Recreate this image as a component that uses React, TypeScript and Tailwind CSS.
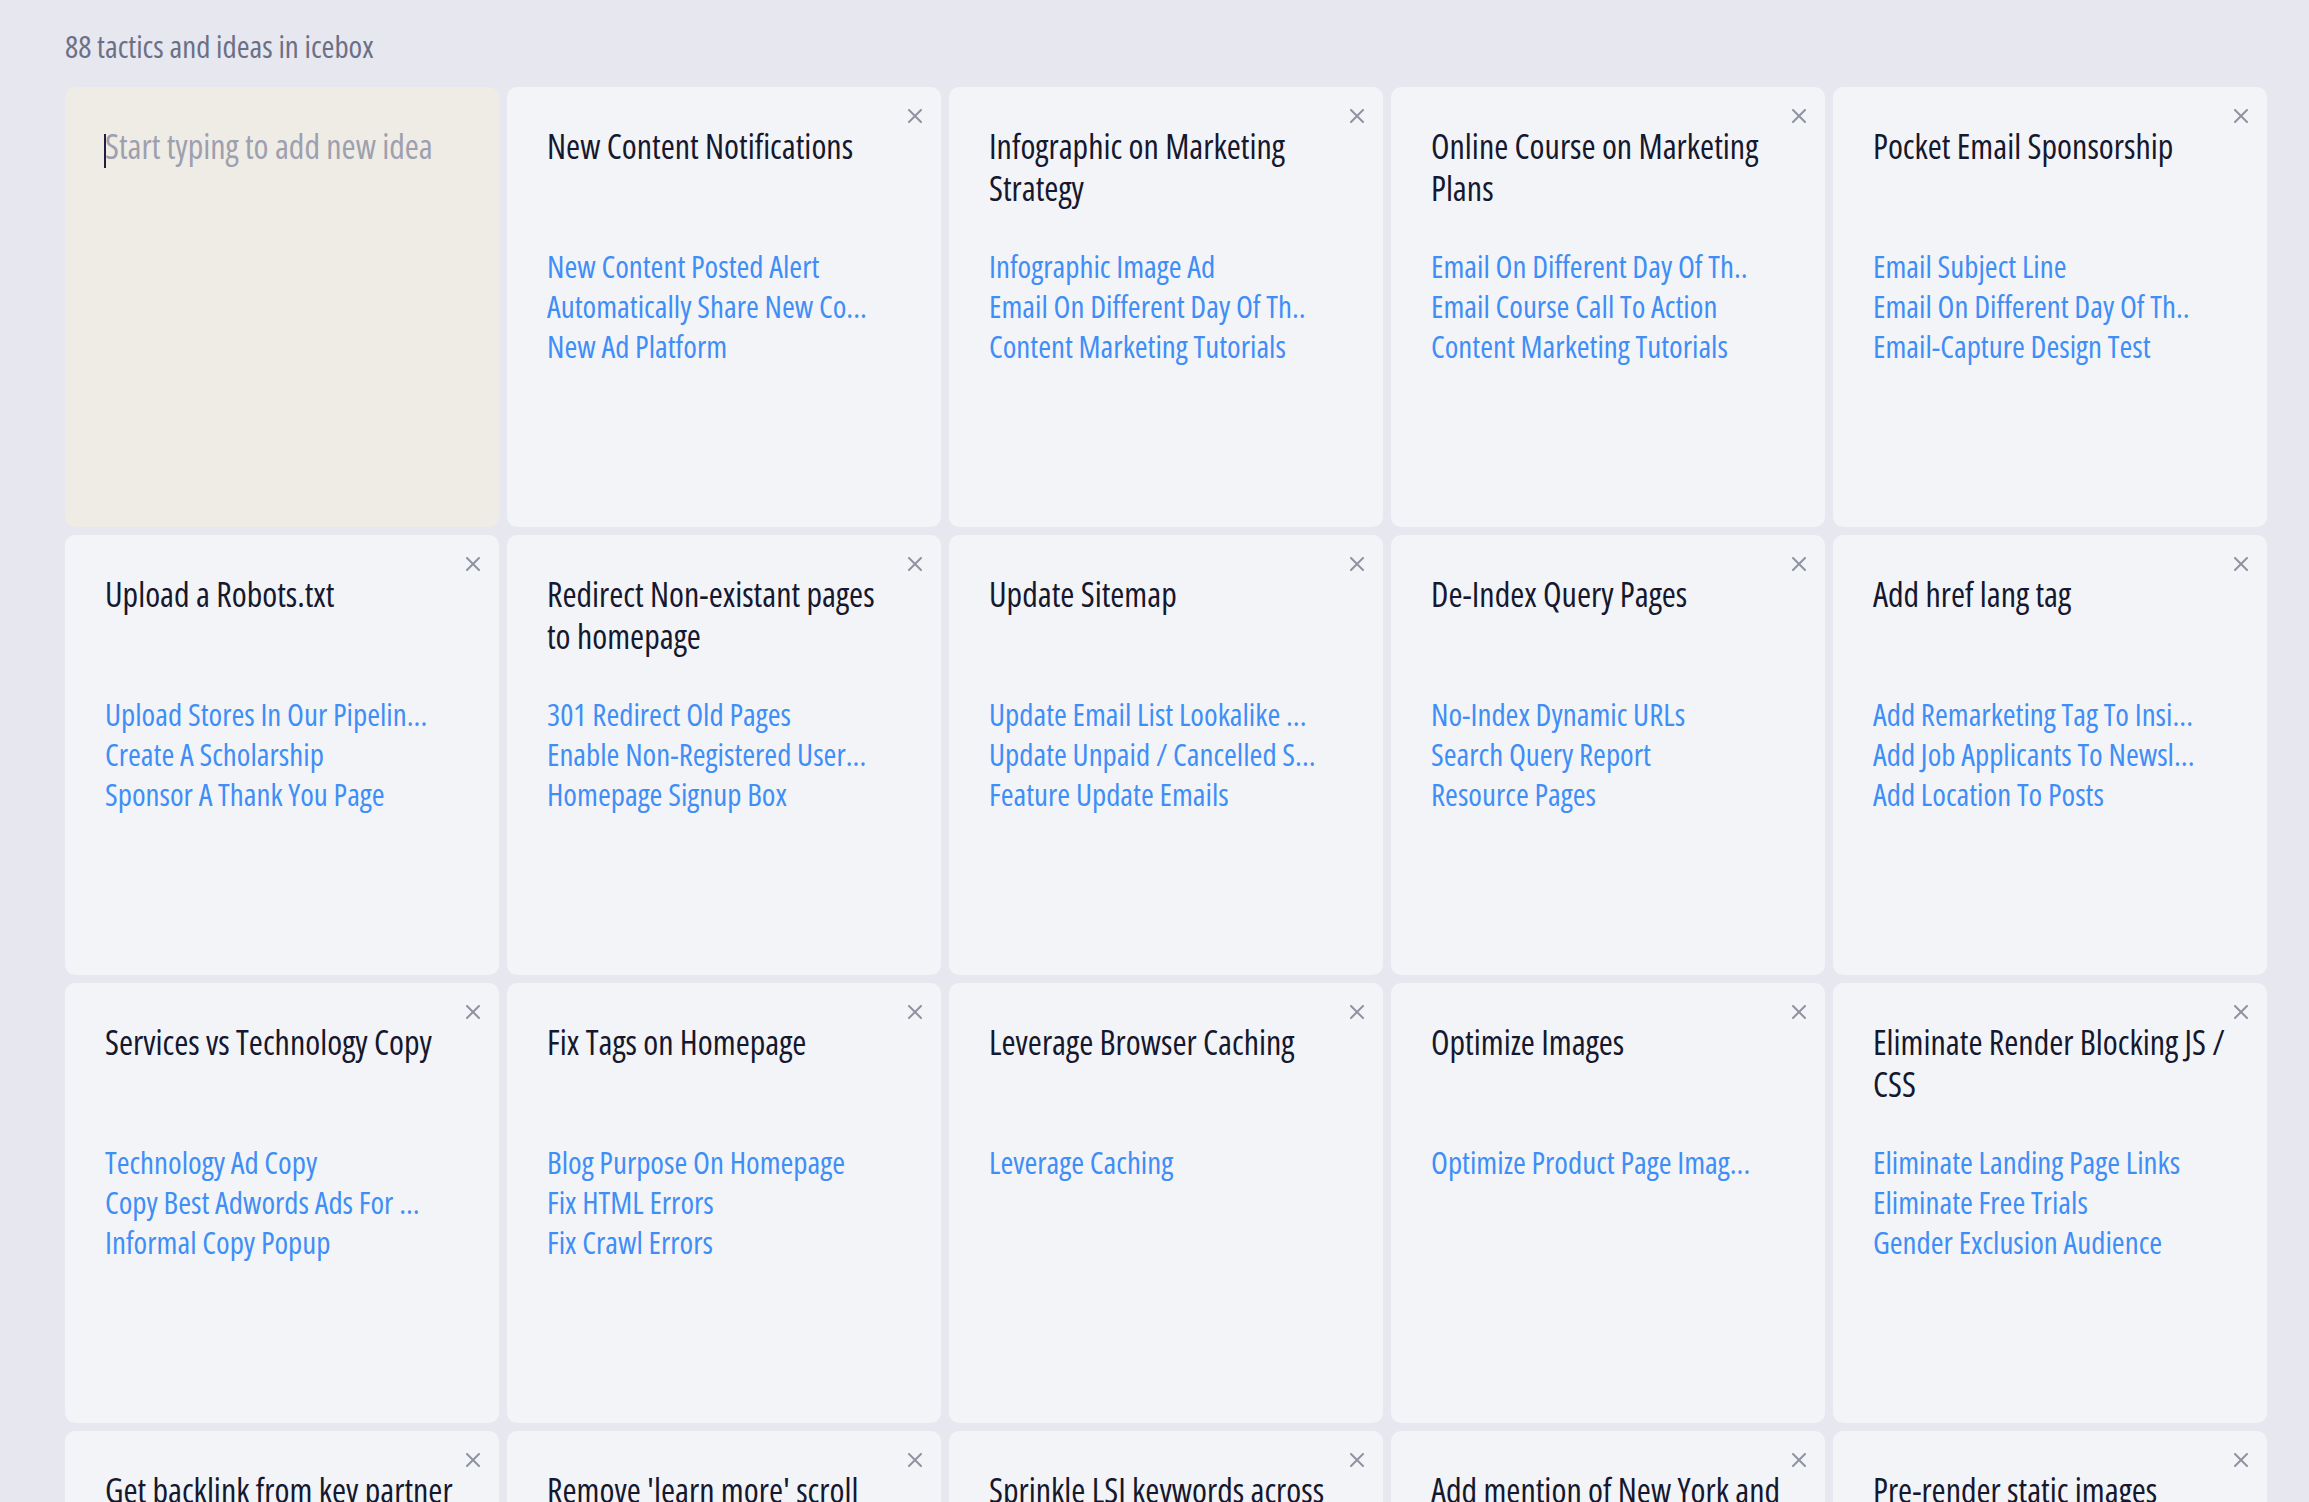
import { useState } from "react";

type Idea = {
  title: string;
  tactics: string[];
};

const ideas: Idea[] = [
  {
    title: "New Content Notifications",
    tactics: ["New Content Posted Alert", "Automatically Share New Co...", "New Ad Platform"],
  },
  {
    title: "Infographic on Marketing Strategy",
    tactics: ["Infographic Image Ad", "Email On Different Day Of Th..", "Content Marketing Tutorials"],
  },
  {
    title: "Online Course on Marketing Plans",
    tactics: ["Email On Different Day Of Th..", "Email Course Call To Action", "Content Marketing Tutorials"],
  },
  {
    title: "Pocket Email Sponsorship",
    tactics: ["Email Subject Line", "Email On Different Day Of Th..", "Email-Capture Design Test"],
  },
  {
    title: "Upload a Robots.txt",
    tactics: ["Upload Stores In Our Pipelin...", "Create A Scholarship", "Sponsor A Thank You Page"],
  },
  {
    title: "Redirect Non-existant pages to homepage",
    tactics: ["301 Redirect Old Pages", "Enable Non-Registered User...", "Homepage Signup Box"],
  },
  {
    title: "Update Sitemap",
    tactics: ["Update Email List Lookalike ...", "Update Unpaid / Cancelled S...", "Feature Update Emails"],
  },
  {
    title: "De-Index Query Pages",
    tactics: ["No-Index Dynamic URLs", "Search Query Report", "Resource Pages"],
  },
  {
    title: "Add href lang tag",
    tactics: ["Add Remarketing Tag To Insi...", "Add Job Applicants To Newsl...", "Add Location To Posts"],
  },
  {
    title: "Services vs Technology Copy",
    tactics: ["Technology Ad Copy", "Copy Best Adwords Ads For ...", "Informal Copy Popup"],
  },
  {
    title: "Fix Tags on Homepage",
    tactics: ["Blog Purpose On Homepage", "Fix HTML Errors", "Fix Crawl Errors"],
  },
  {
    title: "Leverage Browser Caching",
    tactics: ["Leverage Caching"],
  },
  {
    title: "Optimize Images",
    tactics: ["Optimize Product Page Imag..."],
  },
  {
    title: "Eliminate Render Blocking JS / CSS",
    tactics: ["Eliminate Landing Page Links", "Eliminate Free Trials", "Gender Exclusion Audience"],
  },
  {
    title: "Get backlink from key partner sites",
    tactics: ["Partner Link Exchange"],
  },
  {
    title: "Remove 'learn more' scroll arrow",
    tactics: ["Homepage Signup Box"],
  },
  {
    title: "Sprinkle LSI keywords across pages",
    tactics: ["Keyword Research"],
  },
  {
    title: "Add mention of New York and NYC",
    tactics: ["Local Landing Pages"],
  },
  {
    title: "Pre-render static images",
    tactics: ["Optimize Product Page Imag..."],
  },
];

function CloseIcon() {
  return (
    <svg width="14" height="14" viewBox="0 0 14 14" className="block">
      <path d="M1 1L13 13M13 1L1 13" stroke="#8f929f" strokeWidth="2" strokeLinecap="round" />
    </svg>
  );
}

function IdeaCard({ idea }: { idea: Idea }) {
  return (
    <div className="relative h-[440px] rounded-[10px] bg-[#f3f4f8] pl-10 pr-10 pt-[38px]">
      <button type="button" className="absolute right-[19px] top-[22px]">
        <CloseIcon />
      </button>
      <h2 className="min-h-[84px] text-[34px] leading-[42px] text-[#15182e]">{idea.title}</h2>
      <ul className="mt-[37px]">
        {idea.tactics.map((t, i) => (
          <li key={i} className="whitespace-nowrap text-[31px] leading-[40px] text-[#3f8ef6]">
            {t}
          </li>
        ))}
      </ul>
    </div>
  );
}

export default function App() {
  const [draft, setDraft] = useState("");

  return (
    <main className="min-h-screen bg-[#e6e7ef] pb-10 pl-[65px] pr-[42px] pt-[25px] font-['Open_Sans',sans-serif] font-stretch-condensed">
      <p className="text-[31px] leading-[42px] text-[#6c7086]">88 tactics and ideas in icebox</p>

      <div className="mt-[20px] grid grid-cols-5 gap-2">
        <div className="relative h-[440px] rounded-[10px] bg-[#efece5] px-10 pt-[38px]">
          {draft === "" && (
            <span className="pointer-events-none absolute left-[39px] top-[47px] h-[34px] w-[1.5px] bg-[#1d2040]" />
          )}
          <textarea
            value={draft}
            onChange={(e) => setDraft(e.target.value)}
            placeholder="Start typing to add new idea"
            className="h-full w-full resize-none bg-transparent text-[34px] leading-[42px] text-[#15182e] caret-[#15182e] outline-none placeholder:text-[#9da0af]"
          />
        </div>
        {ideas.map((idea) => (
          <IdeaCard key={idea.title} idea={idea} />
        ))}
      </div>
    </main>
  );
}
